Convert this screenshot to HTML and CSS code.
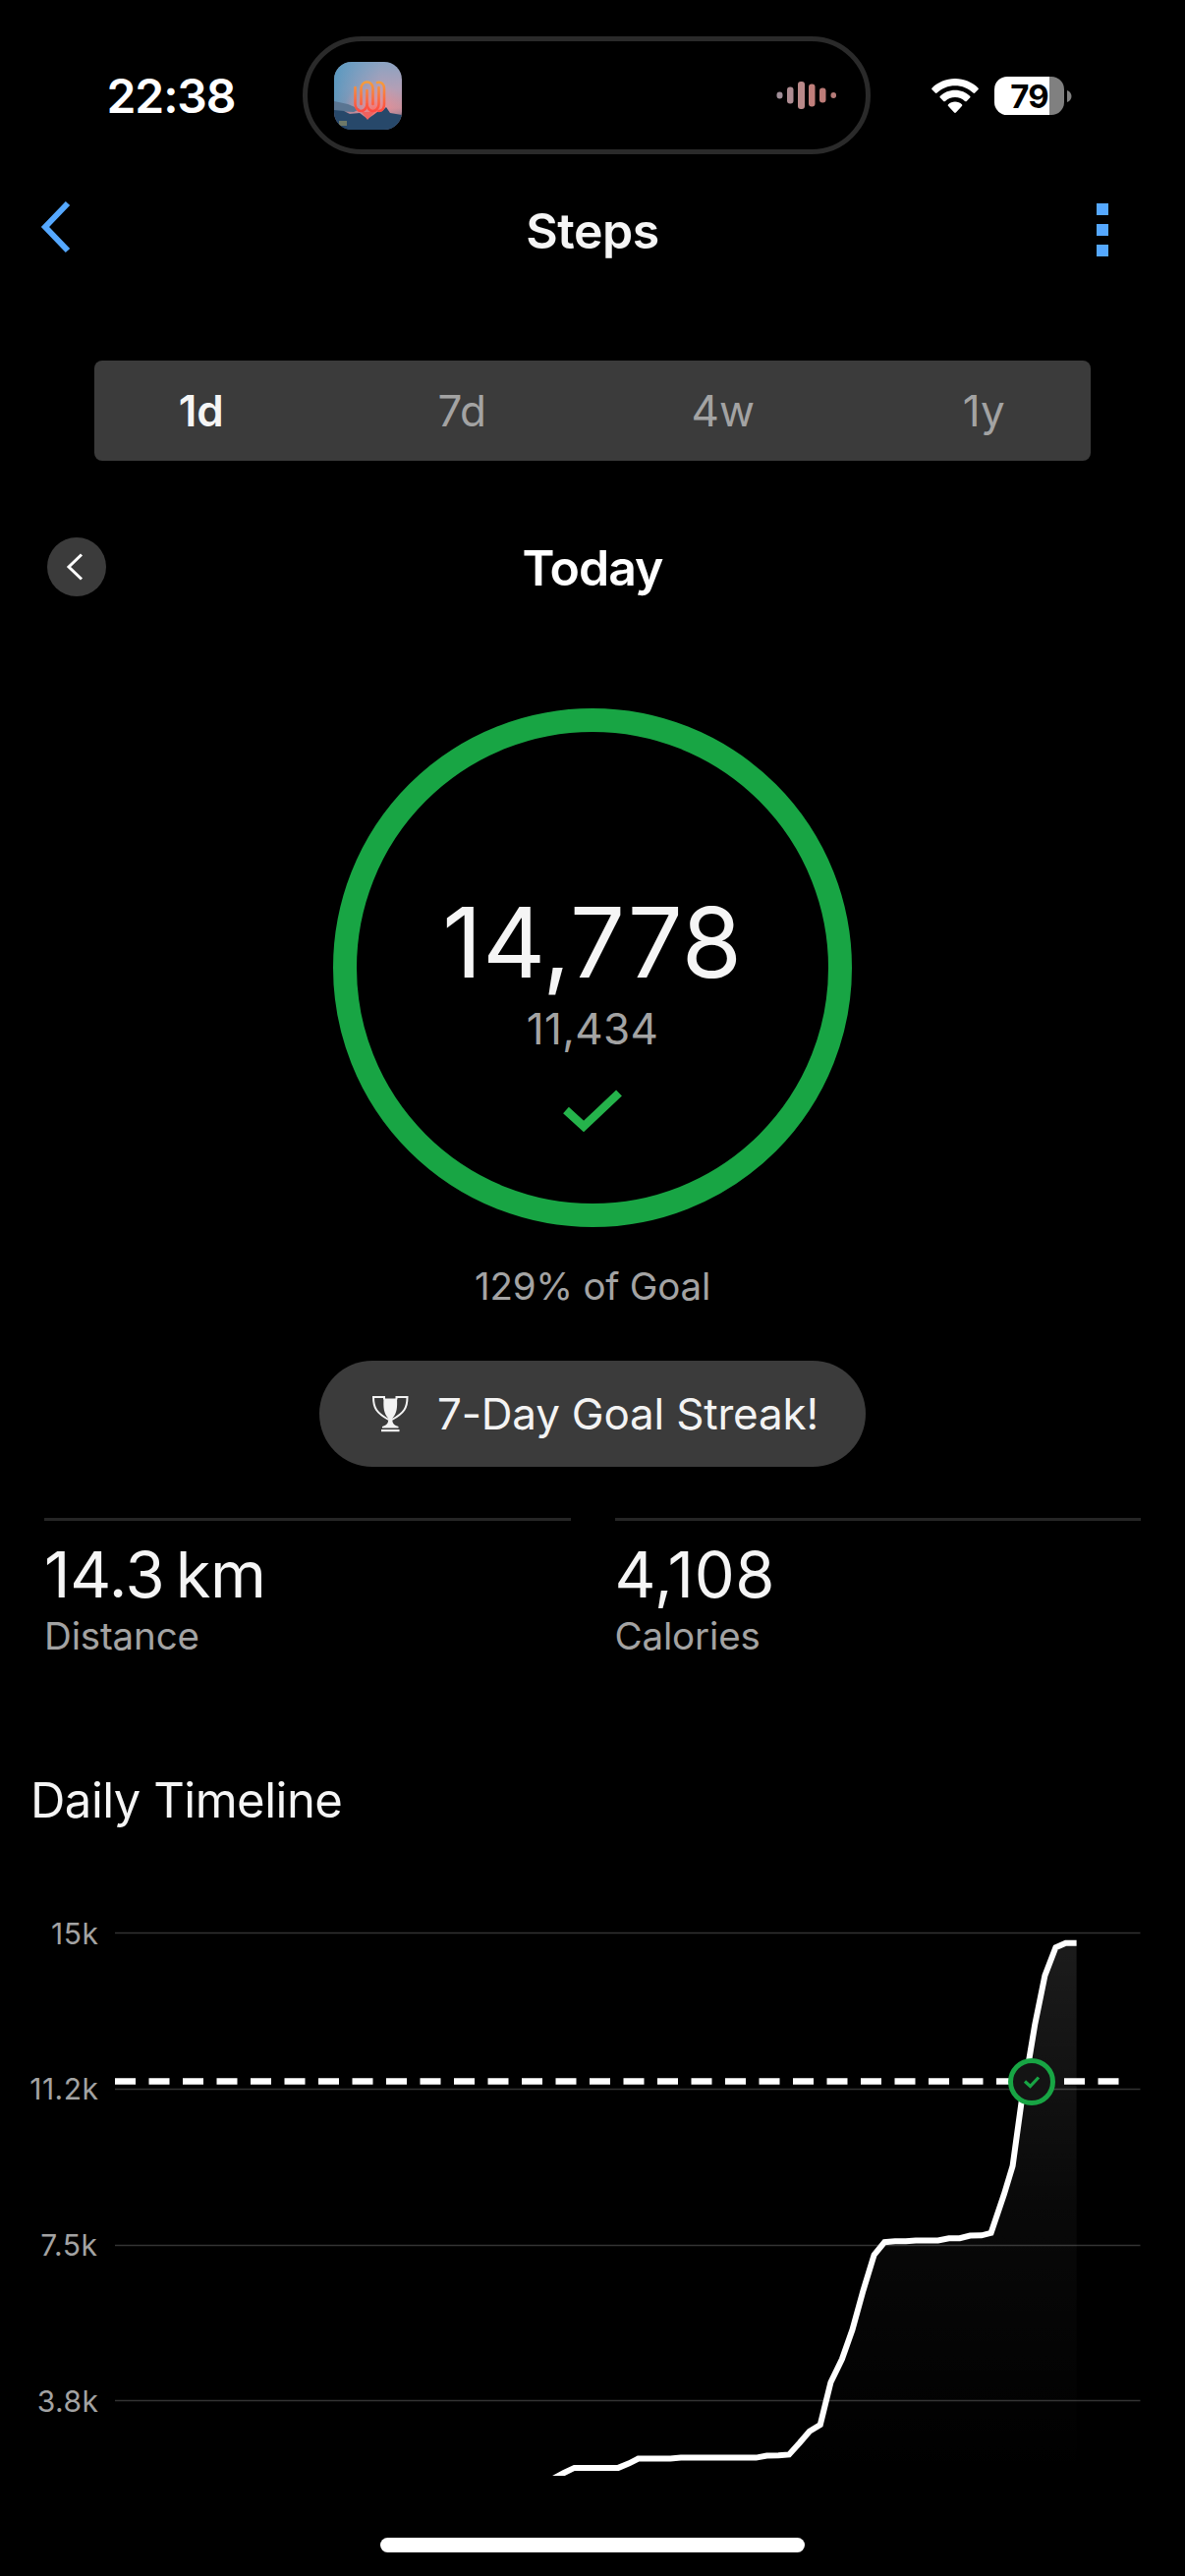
FILE: index.html
```html
<!DOCTYPE html>
<html lang="en">
<head>
    <meta charset="UTF-8">
    <meta name="viewport" content="width=device-width, initial-scale=1.0">
    <title>Steps</title>
    <link rel="stylesheet" href="styles.css">
</head>
<body>

<!-- Status bar -->
<div class="status-bar">
    <span class="status-time">22:38</span>
    <div class="island">
        <svg class="album" width="69" height="69" viewBox="0 0 69 69">
            <defs>
                <linearGradient id="sky" x1="0" y1="0" x2="0" y2="1">
                    <stop offset="0" stop-color="#8ba3c2"/>
                    <stop offset="0.4" stop-color="#b39fb6"/>
                    <stop offset="0.68" stop-color="#c9909c"/>
                    <stop offset="1" stop-color="#38577a"/>
                </linearGradient>
                <radialGradient id="glow" cx="0.6" cy="0.72" r="0.45">
                    <stop offset="0" stop-color="#ff6f64"/>
                    <stop offset="0.4" stop-color="#ee8f96" stop-opacity="0.6"/>
                    <stop offset="1" stop-color="#d99aa8" stop-opacity="0"/>
                </radialGradient>
                <linearGradient id="blueside" x1="0" y1="0" x2="1" y2="0">
                    <stop offset="0" stop-color="#4f97c0" stop-opacity="0.85"/>
                    <stop offset="0.7" stop-color="#5c9cc4" stop-opacity="0"/>
                </linearGradient>
                <linearGradient id="mark" gradientUnits="userSpaceOnUse" x1="0" y1="19" x2="0" y2="50">
                    <stop offset="0" stop-color="#f5a13c"/>
                    <stop offset="1" stop-color="#ff4a42"/>
                </linearGradient>
            </defs>
            <rect width="69" height="69" fill="url(#sky)"/>
            <rect width="69" height="50" fill="url(#blueside)"/>
            <rect width="69" height="69" fill="url(#glow)"/>
            <path d="M0 40L14 43L26 48L20 51L0 50Z" fill="#5a7592"/>
            <path d="M0 49L10 50L16 53L26 52L34 58L40 54L44 51L49 50L53 46L57 52L69 54V69H0Z" fill="#27486a"/>
            <path d="M28 51L34 59L41 51Z" fill="#f0625f"/>
            <rect x="5" y="60" width="8" height="5" fill="#6d7868"/>
            <g fill="none" stroke="url(#mark)" stroke-width="2.6" stroke-linecap="round">
                <path d="M21.500 26V43a6 7 0 0 0 12 0V29"/>
                <path d="M27.500 43V27a6 6.500 0 0 1 12 0V43"/>
                <path d="M33.500 43a6 7 0 0 0 12 0V26"/>
                <path d="M44 21c4.500-1 7 2 7 6V43c0 4-2 7-5.500 7"/>
            </g>
        </svg>
        <svg class="wave" width="62" height="32" viewBox="0 0 62 32">
            <rect x="0.500" y="12.500" width="6" height="7" rx="3" fill="#a08e98"/>
            <rect x="11" y="7.500" width="6.500" height="17" rx="3" fill="#ae8c92"/>
            <rect x="22" y="2" width="7" height="28" rx="3" fill="#b98989"/>
            <rect x="33" y="4.500" width="6.500" height="23" rx="3" fill="#c07f7b"/>
            <rect x="44" y="8.500" width="6.500" height="15" rx="3" fill="#bd7c78"/>
            <rect x="55.500" y="13" width="5.500" height="6" rx="2.750" fill="#b57b78"/>
        </svg>
    </div>
    <div class="status-icons">
        <svg width="48" height="36" viewBox="0 0 48 36" fill="#fff">
            <path d="M24 0C14.800 0 6.500 3.600.6 9.400c-.6.600-.6 1.300 0 1.900l3.200 3.200c.5.500 1.200.5 1.800 0C10.400 9.900 16.900 7.200 24 7.200s13.600 2.700 18.400 7.300c.6.500 1.300.5 1.800 0l3.200-3.200c.6-.6.6-1.300 0-1.900C41.500 3.600 33.200 0 24 0Z"/>
            <path d="M24 11.800c-5.900 0-11.200 2.300-15.100 6-.6.600-.6 1.300 0 1.800l3.300 3.300c.5.500 1.200.5 1.800 0 2.600-2.500 6.100-4 10-4s7.400 1.500 10 4c.6.500 1.300.5 1.800 0l3.300-3.300c.6-.5.6-1.200 0-1.800-3.900-3.700-9.200-6-15.100-6Z"/>
            <path d="M24 23.600c-2.700 0-5.100 1-6.900 2.600-.6.600-.6 1.200 0 1.800l6 6.500c.5.600 1.300.6 1.800 0l6-6.500c.6-.6.6-1.200 0-1.800-1.800-1.600-4.200-2.600-6.900-2.600Z"/>
        </svg>
        <div class="battery"><span>79</span></div>
        <svg class="battery-tip" width="5" height="12" viewBox="0 0 5 12"><path d="M0 0C3 1 4.500 3.500 4.500 6S3 11 0 12Z" fill="#808080"/></svg>
    </div>
</div>

<header class="topbar">
    <svg class="back" width="34" height="56" viewBox="0 0 34 56">
        <path d="M30 4L7 28L30 52" fill="none" stroke="#55a8ff" stroke-width="6"/>
    </svg>
    <h1>Steps</h1>
    <div class="more">
        <i></i>
        <i></i>
        <i></i>
    </div>
</header>

<div class="range-tabs">
    <div class="range-inner">
        <span class="active">1d</span>
        <span>7d</span>
        <span>4w</span>
        <span>1y</span>
    </div>
</div>

<div class="date-row">
    <button class="prev">
        <svg width="60" height="60" viewBox="0 0 60 60">
            <path d="M35 17.500L22 30L35 42.500" fill="none" stroke="#fff" stroke-width="3"/>
        </svg>
    </button>
    <h2>Today</h2>
</div>

<!-- Goal ring -->
<div class="ring">
    <div class="steps">14,778</div>
    <div class="goal">11,434</div>
    <svg class="check" width="62" height="46" viewBox="0 0 62 46">
        <path d="M4 22L22 38.500L58 4.500" fill="none" stroke="#25b34b" stroke-width="8.500"/>
    </svg>
</div>
<div class="percent">129% of Goal</div>

<div class="streak">
    <svg width="37" height="37" viewBox="0 0 37 37">
        <path d="M11.500 2.500H25C25.500 12 25 17 20.500 22.500C20 26 20.500 29.500 26.500 31V32.500H10V31C16 29.500 16.500 26 16 22.500C11.500 17 11 12 11.500 2.500Z" fill="#f3f3f3"/>
        <path d="M12 3.500V1H1C1 12 4 17 16.500 24M24.500 3.500V1H35.500C35.500 12 32.500 17 20 24" fill="none" stroke="#f3f3f3" stroke-width="2"/>
        <rect x="9" y="34" width="18.500" height="2.200" fill="#f3f3f3"/>
    </svg>
    <span>7-Day Goal Streak!</span>
</div>

<div class="stats">
    <div class="stat">
        <div class="stat-value km">14.3 km</div>
        <div class="stat-label">Distance</div>
    </div>
    <div class="stat">
        <div class="stat-value">4,108</div>
        <div class="stat-label">Calories</div>
    </div>
</div>

<h3 class="section-title">Daily Timeline</h3>

<svg class="chart" width="1206" height="580" viewBox="0 1940 1206 580">
    <defs>
        <linearGradient id="area" gradientUnits="userSpaceOnUse" x1="0" y1="1975" x2="0" y2="2520">
            <stop offset="0" stop-color="#fff" stop-opacity="0.11"/>
            <stop offset="0.5" stop-color="#fff" stop-opacity="0.035"/>
            <stop offset="1" stop-color="#fff" stop-opacity="0"/>
        </linearGradient>
    </defs>
    <g class="grid">
        <path d="M117 1967.500H1160.500M117 2126.500H1160.500M117 2285.500H1160.500M117 2443.500H1160.500"/>
    </g>
    <g class="axis">
        <text x="100.500" y="1978.500">15k</text>
        <text x="100.500" y="2136.500">11.2k</text>
        <text x="99.500" y="2295.500">7.5k</text>
        <text x="100.500" y="2454.500">3.8k</text>
    </g>
    <path fill="url(#area)" d="M561 2524L584.600 2512H629L649.600 2502.500L769 2501.600L803 2498.400L823.800 2474.700L834.800 2468L845.400 2425L856.900 2401L867.500 2371L878.600 2331L889.600 2295L900 2282L1008.600 2273L1030.600 2204.700L1039.600 2139.400L1053.200 2061L1063.400 2011L1074.400 1982L1084.600 1977.700H1095.600V2524Z"/>
    <path class="goal-line" d="M117 2118.500H1138.500"/>
    <polyline class="steps-line" points="561,2524 574,2517 584.6,2511.9 629.2,2511.9 640.3,2507.4 649.6,2502.5 682.3,2502.5 692.9,2501.6 769.4,2501.6 780.4,2499.5 792.3,2499.3 803,2498.4 814,2486.3 823.8,2474.7 834.8,2468 845.4,2425 856.9,2401.3 867.5,2371.3 878.6,2331 889.6,2295.2 900.2,2282.2 910.9,2281.3 921.9,2281.3 932,2280.4 954.6,2280.4 965.7,2278.2 976.7,2278.2 987.3,2275.5 998.8,2275.3 1008.6,2272.8 1022,2233 1030.6,2204.7 1039.6,2139.4 1047.6,2094.6 1053.2,2061 1063.4,2010.9 1074.4,1982.2 1084.6,1977.7 1095.6,1977.7"/>
    <circle cx="1050" cy="2119" r="21.500" fill="#141414" stroke="#18a544" stroke-width="5"/>
    <path d="M1043 2118.500L1048.500 2123.500L1057 2114.500" fill="none" stroke="#18a544" stroke-width="3.200"/>
</svg>

<div class="home-indicator"></div>

</body>
</html>
```

FILE: styles.css
```css
body {
    margin: 0;
    width: 1206px;
    height: 2622px;
    overflow: hidden;
    background: #000;
    color: #f5f5f5;
    font-family: Inter, "Liberation Sans", sans-serif;
    display: flex;
    flex-direction: column;
}

h1, h2, h3 {
    margin: 0;
}

svg {
    display: block;
    flex-shrink: 0;
}

/* status bar */
.status-bar {
    display: grid;
    grid-template-columns: 308px 578px 1fr;
    height: 143px;
    padding-top: 37px;
    align-items: start;
    color: #fff;
}

.status-time {
    padding-left: 40px;
    line-height: 122px;
    text-align: center;
    font-size: 48px;
    font-weight: 600;
    letter-spacing: -1.1px;
}

.island {
    box-sizing: border-box;
    height: 120px;
    border: 5px solid #2a2a2a;
    border-radius: 60px;
    display: flex;
    align-items: center;
    justify-content: space-between;
    padding: 0 29px 0 27px;
}

.album {
    border-radius: 18px;
}

.status-icons {
    display: flex;
    align-items: center;
    height: 121px;
    padding-left: 62px;
}

.battery {
    width: 71px;
    height: 39px;
    margin-left: 16px;
    border-radius: 13px;
    background: linear-gradient(to right, #fff 56px, #808080 56px);
    color: #000;
    text-align: center;
    line-height: 40px;
    font-size: 33px;
    font-weight: 700;
    letter-spacing: -1px;
}

.battery-tip {
    margin-left: 3px;
}

/* header */
.topbar {
    height: 110px;
    display: flex;
    align-items: center;
    justify-content: space-between;
    padding: 0 78px 0 39px;
}

.topbar h1 {
    width: 300px;
    margin-left: 17px;
    text-align: center;
    font-size: 50px;
    font-weight: 600;
    letter-spacing: -0.5px;
}

.back {
    margin-bottom: 8px;
}

.more {
    display: flex;
    flex-direction: column;
    gap: 9px;
    margin-bottom: 2px;
}

.more i {
    width: 12px;
    height: 12px;
    background: #55a8ff;
}

/* range selector */
.range-tabs {
    height: 102px;
    margin: 77px 96px 0;
    border-radius: 8px;
    background: #3b3b3b;
}

.range-inner {
    display: flex;
    margin: 0 -24px;
}

.range-inner span {
    flex: 1;
    line-height: 102px;
    text-align: center;
    font-size: 44px;
    color: #a3a3a3;
}

.range-inner .active {
    font-weight: 600;
    color: #f5f5f5;
}

.date-row {
    display: flex;
    align-items: center;
    height: 60px;
    margin-top: 78px;
    padding: 0 48px;
}

.date-row h2 {
    flex: 1;
    margin-right: 60px;
    padding-top: 2px;
    line-height: 62px;
    text-align: center;
    font-size: 50px;
    font-weight: 600;
    letter-spacing: -1px;
    color: #fff;
}

.prev {
    width: 60px;
    height: 60px;
    padding: 0;
    border: none;
    border-radius: 50%;
    background: #3b3b3b;
}

/* goal ring */
.ring {
    box-sizing: border-box;
    width: 528px;
    height: 528px;
    margin: 114px auto 0;
    padding-top: 164px;
    border: 24px solid #18a544;
    border-radius: 50%;
    display: flex;
    flex-direction: column;
    align-items: center;
}

.steps {
    line-height: 100px;
    font-size: 99px;
    letter-spacing: 0.6px;
}

.goal {
    margin-top: 14px;
    line-height: 48px;
    font-size: 44px;
    letter-spacing: 0.3px;
    color: #a3a3a3;
}

.check {
    margin-top: 37px;
}

.percent {
    margin-top: 35px;
    line-height: 50px;
    text-align: center;
    font-size: 38.5px;
    letter-spacing: -0.25px;
    color: #a3a3a3;
}

.streak {
    box-sizing: border-box;
    width: 556px;
    height: 108px;
    margin: 51px auto 0;
    padding-left: 54px;
    border-radius: 54px;
    background: #3b3b3b;
    display: flex;
    align-items: center;
    gap: 29px;
    font-size: 44px;
    letter-spacing: -0.2px;
    color: #f3f3f3;
    white-space: nowrap;
}

/* stats */
.stats {
    display: flex;
    gap: 45px;
    margin: 52px 45px 0;
}

.stat {
    flex: 1;
    border-top: 3px solid #262626;
    padding-top: 19px;
}

.stat-value {
    line-height: 72px;
    font-size: 65px;
    letter-spacing: 0.6px;
}

.stat-value.km {
    letter-spacing: -0.2px;
    word-spacing: -7px;
}

.stat-label {
    margin-top: 3px;
    line-height: 46px;
    font-size: 38.5px;
    letter-spacing: -0.15px;
    color: #a3a3a3;
}

.section-title {
    margin: 115px 0 0 31px;
    line-height: 60px;
    font-size: 49px;
    font-weight: 400;
    letter-spacing: -0.5px;
}

/* timeline chart */
.chart {
    margin-top: 77px;
}

.grid path {
    stroke: #333;
    stroke-width: 1.5;
}

.axis text {
    font-size: 30px;
    letter-spacing: 0.5px;
    fill: #a3a3a3;
    text-anchor: end;
}

.goal-line {
    stroke: #fff;
    stroke-width: 6.5;
    stroke-dasharray: 21 13.5;
}

.steps-line {
    fill: none;
    stroke: #fff;
    stroke-width: 6;
}

.home-indicator {
    width: 432px;
    height: 15px;
    margin: 63px auto 0;
    border-radius: 8px;
    background: #fff;
}
```
